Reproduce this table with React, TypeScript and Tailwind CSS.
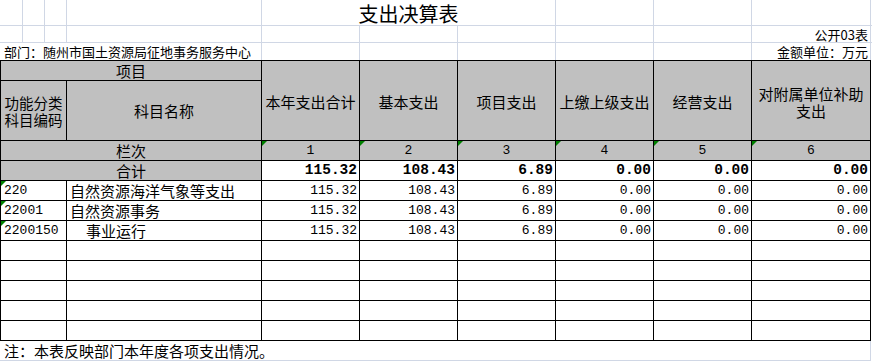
import React from "react";

const cjk = "font-['Noto_Sans_CJK_SC','Noto_Sans',sans-serif]";
const mono = "font-['Liberation_Mono','DejaVu_Sans_Mono',monospace]";

const headCols = ["本年支出合计", "基本支出", "项目支出", "上缴上级支出", "经营支出"];

const values = ["115.32", "108.43", "6.89", "0.00", "0.00", "0.00"];

const rows = [
  { code: "220", name: "自然资源海洋气象等支出", indent: false },
  { code: "22001", name: "自然资源事务", indent: false },
  { code: "2200150", name: "事业运行", indent: true },
];

function Flag() {
  return (
    <span className="absolute left-0 top-0 w-0 h-0 border-t-[5px] border-t-[#008000] border-r-[5px] border-r-transparent" />
  );
}

export default function App() {
  return (
    <div className={`w-[872px] h-[361px] bg-white overflow-hidden text-black ${cjk}`}>
      {/* sheet header rows */}
      <div className="flex h-[26px] border-b border-[#d0d7e5]">
        <div className="w-[23px] border-r border-[#d0d7e5]" />
        <div className="w-[22px] border-r border-[#d0d7e5]" />
        <div className="w-[22px] border-r border-[#d0d7e5]" />
        <div className="w-[195px] border-r border-[#d0d7e5]" />
        <div className="w-[294px] border-r border-[#d0d7e5] flex items-center justify-center text-[20px] leading-none pt-[2px]">
          支出决算表
        </div>
        <div className="w-[98px] border-r border-[#d0d7e5]" />
        <div className="w-[98px] border-r border-[#d0d7e5]" />
        <div className="w-[119px] border-r border-[#d0d7e5]" />
      </div>
      <div className="flex h-[17px] border-b border-[#d0d7e5] text-[13px] leading-none">
        <div className="w-[23px] border-r border-[#d0d7e5]" />
        <div className="w-[22px] border-r border-[#d0d7e5]" />
        <div className="w-[22px] border-r border-[#d0d7e5]" />
        <div className="w-[195px] border-r border-[#d0d7e5]" />
        <div className="w-[98px] border-r border-[#d0d7e5]" />
        <div className="w-[98px] border-r border-[#d0d7e5]" />
        <div className="w-[98px] border-r border-[#d0d7e5]" />
        <div className="w-[98px] border-r border-[#d0d7e5]" />
        <div className="w-[98px] border-r border-[#d0d7e5]" />
        <div className="w-[119px] border-r border-[#d0d7e5] flex items-center justify-end pr-[2px]">公开03表</div>
      </div>
      <div className="flex h-[17px] text-[13px] leading-none">
        <div className="w-[262px] border-r border-[#d0d7e5] flex items-center pl-[4px] whitespace-nowrap">
          部门：随州市国土资源局征地事务服务中心
        </div>
        <div className="w-[98px] border-r border-[#d0d7e5]" />
        <div className="w-[98px] border-r border-[#d0d7e5]" />
        <div className="w-[98px] border-r border-[#d0d7e5]" />
        <div className="w-[98px] border-r border-[#d0d7e5]" />
        <div className="w-[98px] border-r border-[#d0d7e5]" />
        <div className="w-[119px] border-r border-[#d0d7e5] flex items-center justify-end pr-[2px] whitespace-nowrap">
          金额单位：万元
        </div>
      </div>

      {/* main table */}
      <div className="w-[871px] grid grid-cols-[65px_194px_97px_97px_97px_97px_97px_118px] grid-rows-[19px_59px_repeat(10,19px)] gap-px bg-black p-px text-[15px] leading-none">
        <div className="col-span-2 bg-[#c0c0c0] flex items-center justify-center">项目</div>
        {headCols.map((h) => (
          <div key={h} className="row-span-2 bg-[#c0c0c0] flex items-center justify-center whitespace-nowrap pt-[2px]">
            {h}
          </div>
        ))}
        <div className="row-span-2 bg-[#c0c0c0] flex flex-col items-center justify-center leading-[17px] pt-[2px]">
          <span>对附属单位补助</span>
          <span>支出</span>
        </div>
        <div className="bg-[#c0c0c0] flex flex-col items-center justify-center text-[14.5px] leading-[17px] whitespace-nowrap">
          <span>功能分类</span>
          <span>科目编码</span>
        </div>
        <div className="bg-[#c0c0c0] flex items-center justify-center">科目名称</div>

        <div className="col-span-2 bg-[#c0c0c0] flex items-center justify-center">栏次</div>
        {[1, 2, 3, 4, 5, 6].map((n) => (
          <div key={n} className={`relative bg-[#c0c0c0] flex items-center justify-center text-[13px] ${mono}`}>
            <Flag />
            {n}
          </div>
        ))}

        <div className="col-span-2 bg-[#c0c0c0] flex items-center justify-center">合计</div>
        {values.map((v, i) => (
          <div key={i} className={`bg-white flex items-center justify-end pr-[2px] text-[14.5px] font-bold ${mono}`}>
            {v}
          </div>
        ))}

        {rows.map((r) => (
          <React.Fragment key={r.code}>
            <div className={`relative bg-white flex items-center pl-[3px] text-[13px] ${mono}`}>
              <Flag />
              {r.code}
            </div>
            <div className={`bg-white flex items-center whitespace-nowrap ${r.indent ? "pl-[19px]" : "pl-[3px]"}`}>
              {r.name}
            </div>
            {values.map((v, i) => (
              <div key={i} className={`bg-white flex items-center justify-end pr-[2px] text-[13px] ${mono}`}>
                {v}
              </div>
            ))}
          </React.Fragment>
        ))}

        {Array.from({ length: 40 }).map((_, i) => (
          <div key={i} className="bg-white" />
        ))}
      </div>

      <div className="w-[871px] h-[20px] border-b border-r border-[#d0d7e5] flex items-center pl-[4px] text-[15px] leading-none whitespace-nowrap">
        注：本表反映部门本年度各项支出情况。
      </div>
    </div>
  );
}
